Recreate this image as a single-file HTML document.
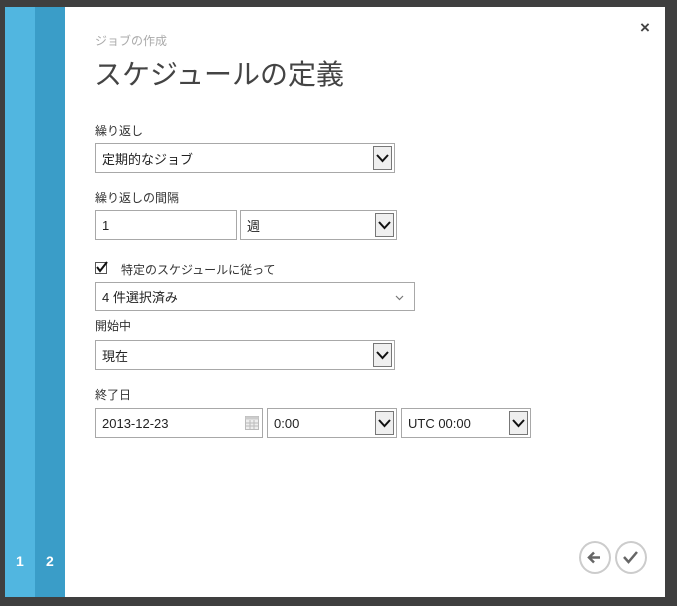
<!DOCTYPE html><html><head><meta charset="utf-8"><style>
body{margin:0;width:677px;height:606px;background:#3f3f3f;position:relative;overflow:hidden;font-family:"Liberation Sans","Noto Sans CJK JP",sans-serif;color:#222}
.p{position:absolute}
.panel{left:5px;top:7px;width:660px;height:590px;background:#fff}
.s1{left:5px;top:7px;width:30px;height:590px;background:#51b6e0}
.s2{left:35px;top:7px;width:30px;height:590px;background:#3a9dc8}
.num{color:#fff;font-weight:bold;font-size:14px;top:553px}
.lbl{font-size:12px;color:#333}
.box{border:1px solid #a8a8a8;box-sizing:border-box;background:#fff;font-size:13px;padding-left:6px;display:flex;align-items:center}
.dd{position:absolute;right:2px;top:2px;bottom:2px;width:19px;border:1px solid #777;background:#efefef;box-sizing:border-box}
.dd svg{position:absolute;left:2px;top:5px}
.circ{width:32px;height:33px;border:2px solid #ccc;border-radius:50%;box-sizing:border-box}
</style></head><body>
<div class="p panel"></div><div class="p s1"></div><div class="p s2"></div>
<div class="p num" style="left:16px">1</div><div class="p num" style="left:46px">2</div>
<div class="p" style="left:640px;top:18px;font-size:17px;color:#444;font-weight:bold">×</div>
<div class="p" style="left:95px;top:32px;font-size:12px;color:#aaa">ジョブの作成</div>
<div class="p" style="left:94px;top:53px;font-size:28px;color:#444">スケジュールの定義</div>

<div class="p lbl" style="left:95px;top:122px">繰り返し</div>
<div class="p box" style="left:95px;top:143px;width:300px;height:30px">定期的なジョブ<div class="dd"><svg width="13" height="12"><path d="M1 3 L6.5 9 L12 3" stroke="#111" stroke-width="2" fill="none"/></svg></div></div>

<div class="p lbl" style="left:95px;top:189px">繰り返しの間隔</div>
<div class="p box" style="left:95px;top:210px;width:142px;height:30px">1</div>
<div class="p box" style="left:240px;top:210px;width:157px;height:30px">週<div class="dd"><svg width="13" height="12"><path d="M1 3 L6.5 9 L12 3" stroke="#111" stroke-width="2" fill="none"/></svg></div></div>

<div class="p" style="left:95px;top:262px;width:12px;height:12px;border:1px solid #555;box-sizing:border-box"><svg width="12" height="12" style="position:absolute;left:0;top:-2px"><path d="M1 6 L4 10 L11 1" stroke="#111" stroke-width="2" fill="none"/></svg></div>
<div class="p lbl" style="left:121px;top:261px">特定のスケジュールに従って</div>
<div class="p box" style="left:95px;top:282px;width:320px;height:29px">4 件選択済み<svg class="p" style="right:10px;top:12px" width="9" height="6"><path d="M1 1 L4.5 4.5 L8 1" stroke="#777" stroke-width="1.2" fill="none"/></svg></div>

<div class="p lbl" style="left:95px;top:317px">開始中</div>
<div class="p box" style="left:95px;top:340px;width:300px;height:30px">現在<div class="dd"><svg width="13" height="12"><path d="M1 3 L6.5 9 L12 3" stroke="#111" stroke-width="2" fill="none"/></svg></div></div>

<div class="p lbl" style="left:95px;top:386px">終了日</div>
<div class="p box" style="left:95px;top:408px;width:168px;height:30px">2013-12-23<svg class="p" style="right:3px;top:7px" width="14" height="14"><rect x="0.5" y="0.5" width="13" height="13" fill="#eee" stroke="#bbb"/><rect x="0.5" y="0.5" width="13" height="3" fill="#ccc"/><path d="M5 4V14M9 4V14M1 7H13M1 10H13" stroke="#bbb"/></svg></div>
<div class="p box" style="left:267px;top:408px;width:130px;height:30px">0:00<div class="dd"><svg width="13" height="12"><path d="M1 3 L6.5 9 L12 3" stroke="#111" stroke-width="2" fill="none"/></svg></div></div>
<div class="p box" style="left:401px;top:408px;width:130px;height:30px">UTC 00:00<div class="dd"><svg width="13" height="12"><path d="M1 3 L6.5 9 L12 3" stroke="#111" stroke-width="2" fill="none"/></svg></div></div>

<div class="p circ" style="left:579px;top:541px"><svg width="28" height="29"><path d="M8 14.5H19M13 9.5L8 14.5L13 19.5" stroke="#666" stroke-width="2.5" fill="none"/></svg></div>
<div class="p circ" style="left:615px;top:541px"><svg width="28" height="29"><path d="M7 14L11.5 19L20 9" stroke="#666" stroke-width="2.5" fill="none"/></svg></div>
</body></html>
